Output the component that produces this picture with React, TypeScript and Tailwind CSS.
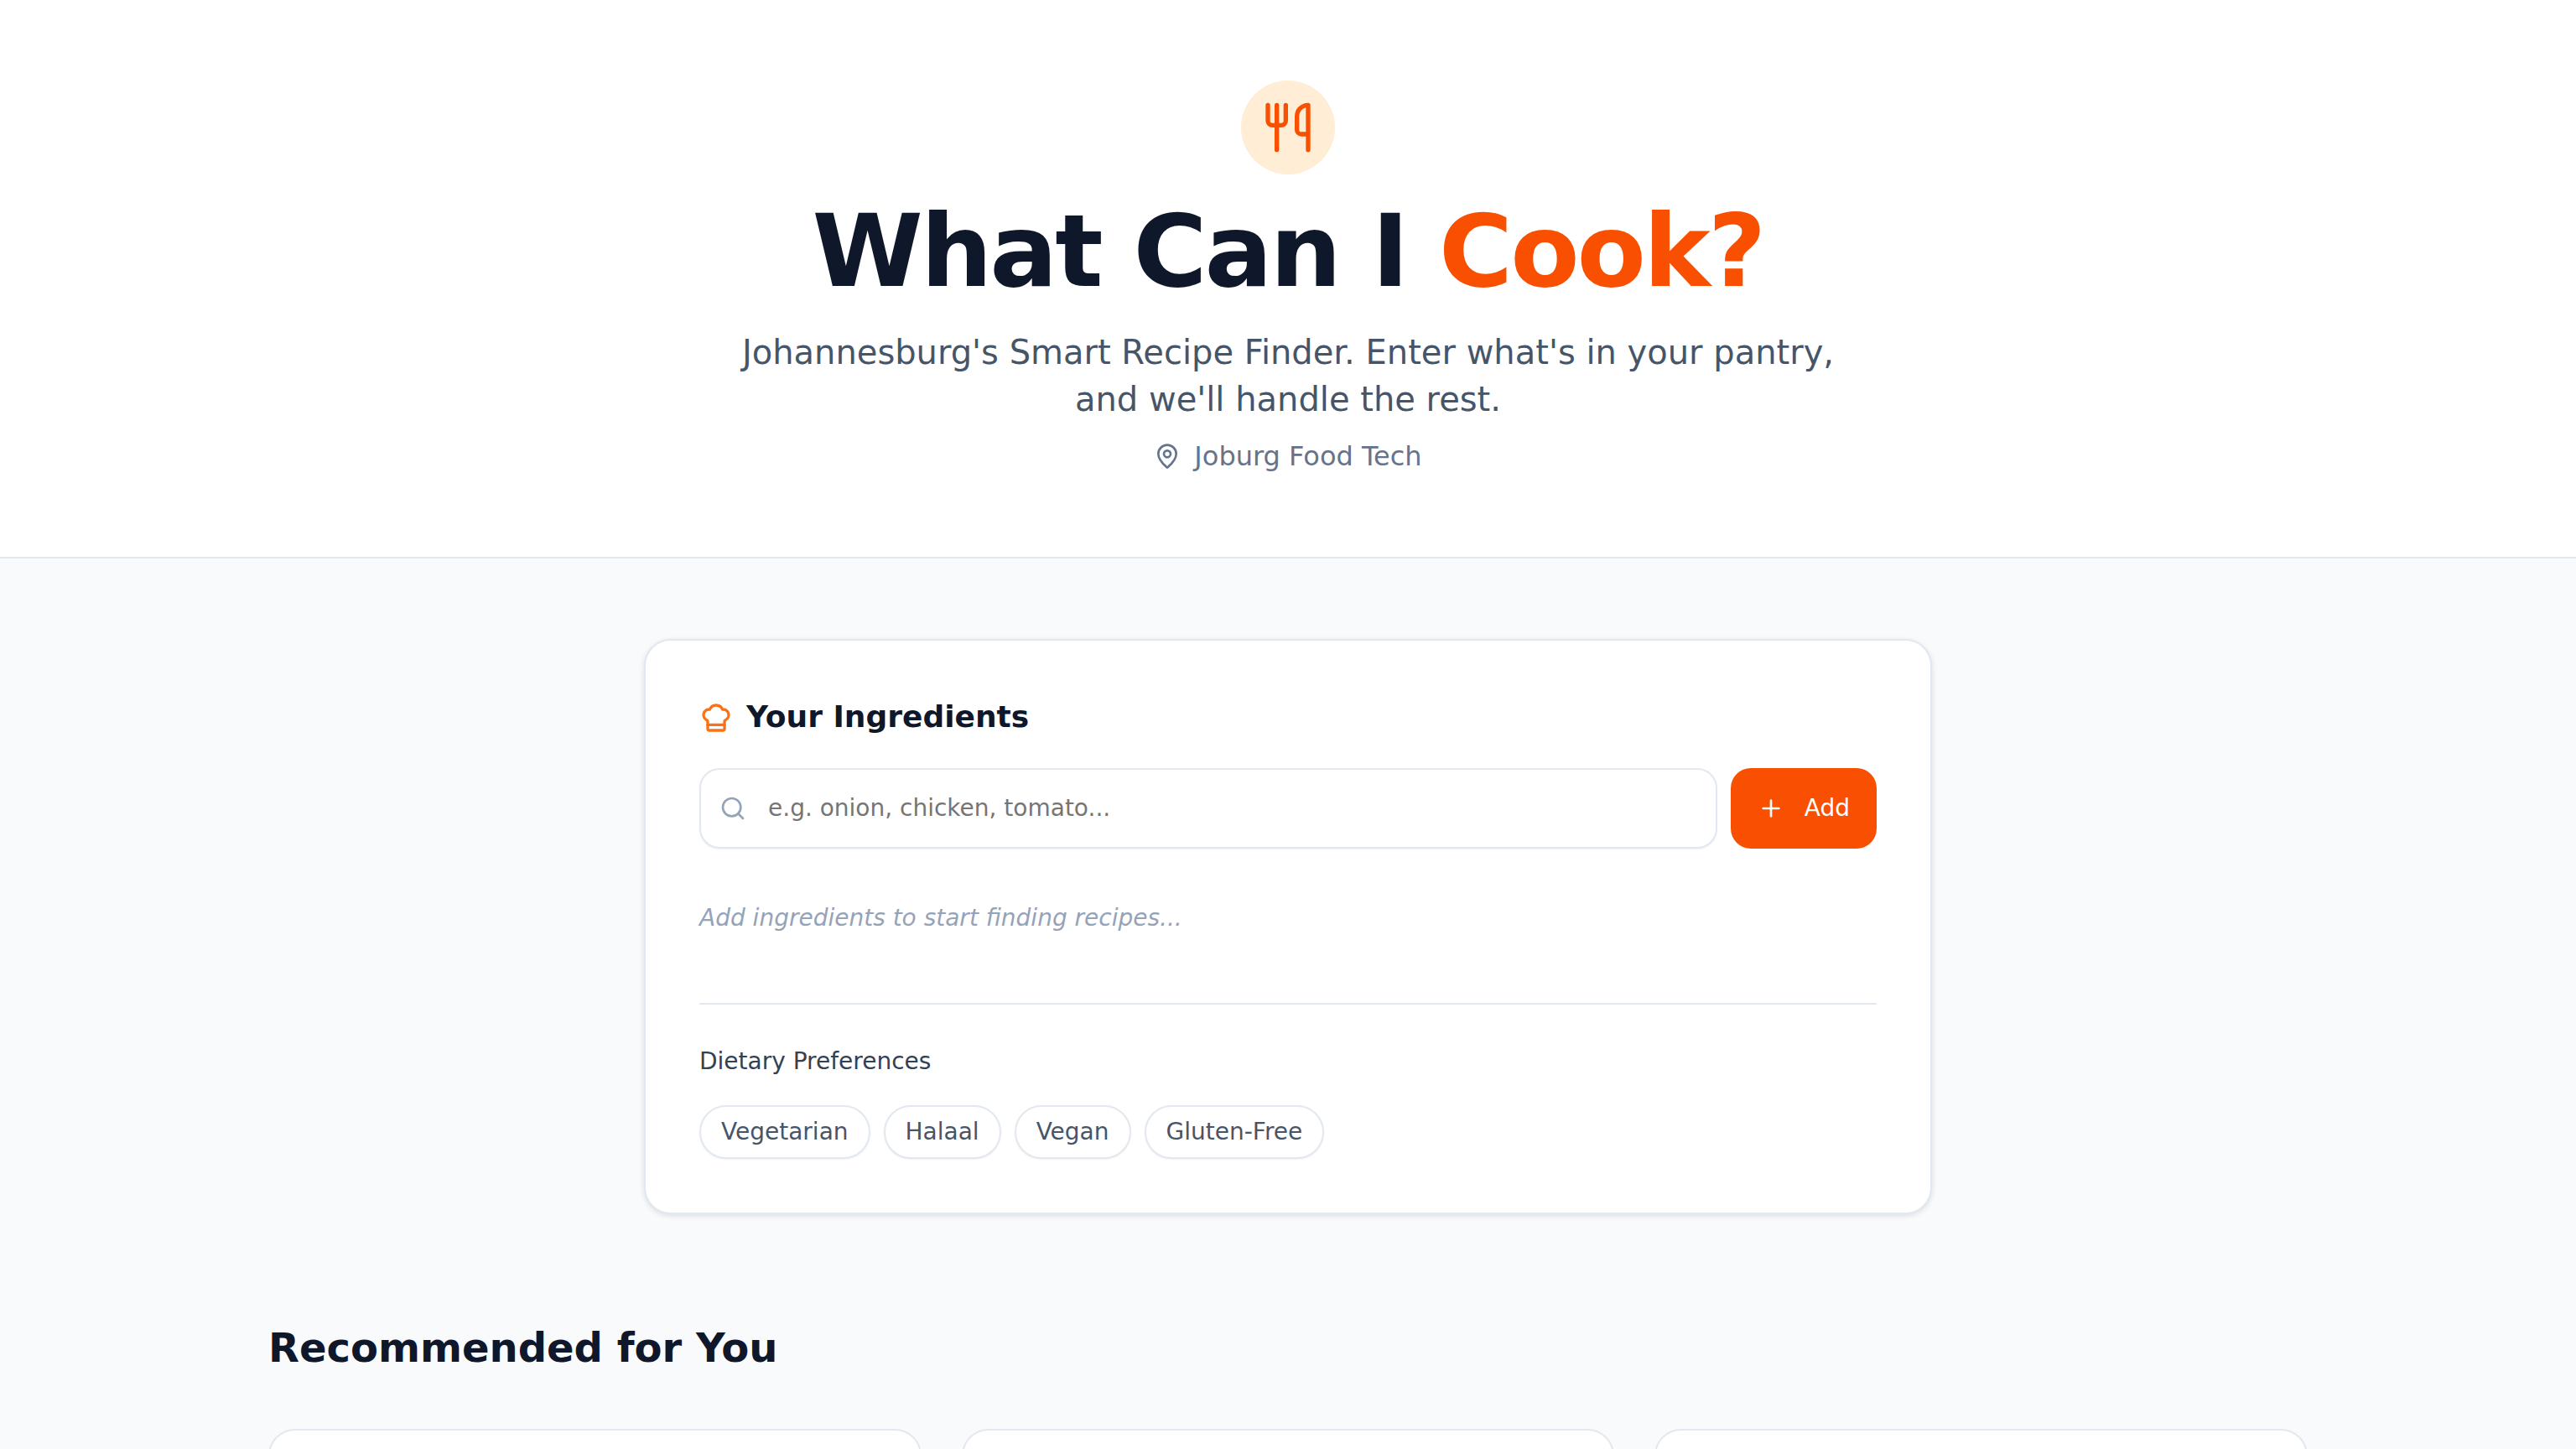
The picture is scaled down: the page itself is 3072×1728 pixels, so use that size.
import { ChefHat, MapPin, Plus, Search, Utensils } from "lucide-react";

const chips = ["Vegetarian", "Halaal", "Vegan", "Gluten-Free"];

export default function App() {
  return (
    <div className="h-screen overflow-hidden bg-[#f8fafc] [font-family:'DejaVu_Sans',sans-serif]">
      <header className="flex flex-col items-center border-b-2 border-[#e2e8f0] bg-white pt-24 pb-24">
        <div className="mb-8 flex h-28 w-28 items-center justify-center rounded-full bg-[#ffedd5]">
          <Utensils className="h-16 w-16 text-[#f94f00]" />
        </div>
        <h1 className="text-[120px] leading-none font-bold tracking-tight text-[#0f172a]">
          What Can I <span className="text-[#f94f00]">Cook?</span>
        </h1>
        <p className="mt-8 max-w-[1344px] text-center text-[40px] leading-[56px] text-[#475569]">
          Johannesburg's Smart Recipe Finder. Enter what's in your pantry,
          <br />
          and we'll handle the rest.
        </p>
        <div className="mt-4 flex items-center gap-4 text-[32px] leading-[48px] text-[#64748b]">
          <MapPin className="h-8 w-8" />
          <span>Joburg Food Tech</span>
        </div>
      </header>

      <main className="mx-auto max-w-[2560px] px-16 pt-24">
        <section className="mx-auto w-[1536px] rounded-[32px] border-2 border-[#e2e8f0] bg-white p-16 shadow-[0_2px_6px_rgba(15,23,42,0.12)]">
          <div className="flex items-center gap-4">
            <ChefHat className="h-10 w-10 text-[#f97316]" />
            <h2 className="pb-[2px] text-[36px] leading-[54px] font-bold text-[#0f172a]">Your Ingredients</h2>
          </div>
          <div className="mt-8 flex gap-4">
            <div className="relative flex-1">
              <Search className="absolute top-8 left-6 h-8 w-8 text-[#94a3b8]" />
              <input
                placeholder="e.g. onion, chicken, tomato..."
                className="h-24 w-full rounded-[24px] border-2 border-[#e2e8f0] bg-white pr-8 pb-[2px] pl-20 text-[28px] text-[#0f172a] shadow-[0_1px_2px_rgba(15,23,42,0.06)] outline-none placeholder:text-[#757575]"
              />
            </div>
            <button className="flex h-24 items-center gap-6 rounded-[24px] bg-[#f94f00] px-8 text-[28px] font-medium text-white">
              <Plus className="h-8 w-8" />
              Add
            </button>
          </div>
          <div className="mt-8 flex h-[152px] items-start pt-[31px] text-[28px] leading-10 text-[#94a3b8] italic">
            Add ingredients to start finding recipes...
          </div>
          <div className="border-t-2 border-[#e2e8f0] pt-12">
            <div className="text-[28px] leading-10 font-medium text-[#334155]">Dietary Preferences</div>
            <div className="mt-8 flex gap-4">
              {chips.map((c) => (
                <button
                  key={c}
                  className="h-16 rounded-full border-2 border-[#e2e8f0] bg-white px-6 text-[28px] font-medium text-[#475569] shadow-[0_1px_2px_rgba(15,23,42,0.06)]"
                >
                  {c}
                </button>
              ))}
            </div>
          </div>
        </section>

        <h2 className="mt-[127px] text-[48px] leading-[64px] font-bold text-[#0f172a]">Recommended for You</h2>
        <div className="mt-[65px] grid grid-cols-3 gap-12">
          <div className="h-[400px] rounded-[32px] border-2 border-[#e2e8f0] bg-white" />
          <div className="h-[400px] rounded-[32px] border-2 border-[#e2e8f0] bg-white" />
          <div className="h-[400px] rounded-[32px] border-2 border-[#e2e8f0] bg-white" />
        </div>
      </main>
    </div>
  );
}
